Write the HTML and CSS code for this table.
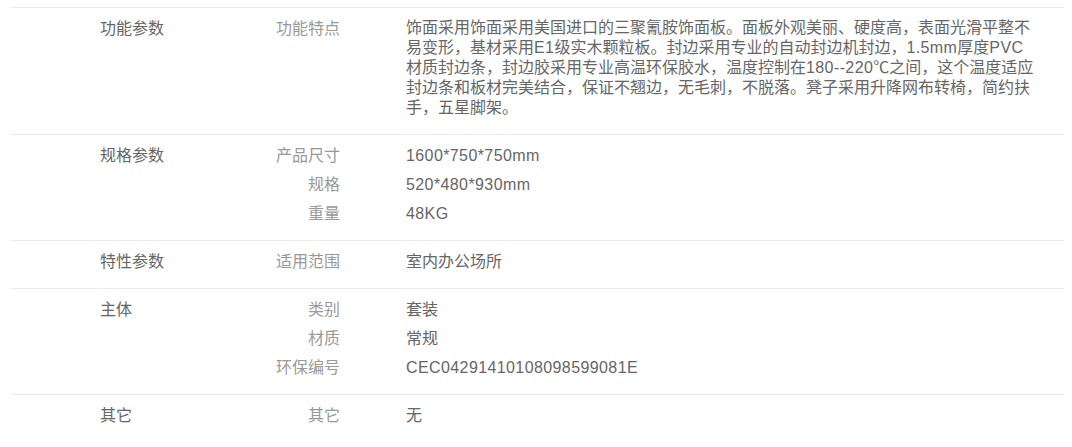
FILE: index.html
```html
<!DOCTYPE html>
<html lang="zh-CN">
<head>
<meta charset="utf-8">
<title>参数</title>
<link rel="stylesheet" href="styles.css">
</head>
<body>
<div class="spec">
  <div class="group">
    <div class="group-name">功能参数</div>
    <div class="items">
      <div class="item">
        <div class="label">功能特点</div>
        <div class="value long">饰面采用饰面采用美国进口的三聚氰胺饰面板。面板外观美丽、硬度高，表面光滑平整不易变形，基材采用<span class="en">E1</span>级实木颗粒板。封边采用专业的自动封边机封边，<span class="en">1.5mm</span>厚度<span class="en">PVC</span>材质封边条，封边胶采用专业高温环保胶水，温度控制在<span class="en">180--220</span>℃之间，这个温度适应封边条和板材完美结合，保证不翘边，无毛刺，不脱落。凳子采用升降网布转椅，简约扶手，五星脚架。</div>
      </div>
    </div>
  </div>
  <div class="group">
    <div class="group-name">规格参数</div>
    <div class="items">
      <div class="item"><div class="label">产品尺寸</div><div class="value en">1600*750*750mm</div></div>
      <div class="item"><div class="label">规格</div><div class="value en">520*480*930mm</div></div>
      <div class="item"><div class="label">重量</div><div class="value en">48KG</div></div>
    </div>
  </div>
  <div class="group">
    <div class="group-name">特性参数</div>
    <div class="items">
      <div class="item"><div class="label">适用范围</div><div class="value">室内办公场所</div></div>
    </div>
  </div>
  <div class="group">
    <div class="group-name">主体</div>
    <div class="items">
      <div class="item"><div class="label">类别</div><div class="value">套装</div></div>
      <div class="item"><div class="label">材质</div><div class="value">常规</div></div>
      <div class="item"><div class="label">环保编号</div><div class="value en">CEC04291410108098599081E</div></div>
    </div>
  </div>
  <div class="group">
    <div class="group-name">其它</div>
    <div class="items">
      <div class="item"><div class="label">其它</div><div class="value">无</div></div>
    </div>
  </div>
</div>
</body>
</html>
```
FILE: styles.css
```css
html, body {
  margin: 0;
  padding: 0;
  background: #fff;
}
body {
  font-family: "Liberation Sans", "Noto Sans CJK SC", sans-serif;
  font-size: 16px;
  line-height: 21px;
  color: #666;
}
.spec {
  margin: 7px 8px 0 11px;
  width: 1053px;
}
.group {
  display: flex;
  border-top: 1px solid #ebebeb;
  padding: 10px 30px 16px 89px;
}
.group-name {
  width: 150px;
  flex: none;
  color: #666;
}
.items {
  flex: 1;
  display: flex;
  flex-direction: column;
  gap: 8px;
}
.item {
  display: flex;
  gap: 66px;
}
.label {
  width: 90px;
  flex: none;
  text-align: right;
  color: #999;
}
.value {
  flex: 1;
  color: #666;
}
.value.long {
  line-height: 20px;
}
.en {
  letter-spacing: 0.4px;
}
```
